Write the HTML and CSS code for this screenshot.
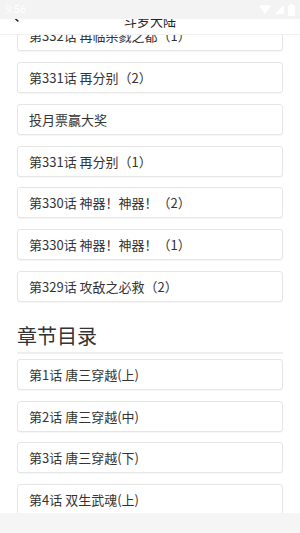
FILE: index.html
```html
<!DOCTYPE html>
<html lang="zh">
<head>
<meta charset="utf-8">
<title>斗罗大陆</title>
<link rel="stylesheet" href="styles.css">
</head>
<body>
<div class="app">
  <div class="status">
    <span class="time">9:56</span>
    <span class="sicons">
      <svg width="12" height="9" viewBox="0 0 12 9"><path d="M0 1 Q6 -1.5 12 1 L6 9 Z" fill="#fff"/></svg>
      <svg width="9" height="9" viewBox="0 0 9 9"><path d="M9 0 L9 9 L0 9 Z" fill="#fff"/></svg>
      <svg width="7" height="12" viewBox="0 0 7 12"><rect x="2" y="0" width="3" height="1.5" fill="#fff"/><rect x="0" y="1.3" width="7" height="10.7" rx="0.7" fill="#fff"/></svg>
    </span>
  </div>
  <div class="header">
    <div class="header-inner">
      <span class="back">
        <svg width="7" height="11" viewBox="0 0 7 11"><path d="M6.3 0.6 L1 5.5 L6.3 10.4" fill="none" stroke="#222" stroke-width="1.5"/></svg>
      </span>
      <span class="title">斗罗大陆</span>
      <span class="spacer"></span>
    </div>
  </div>
  <div class="content">
    <div class="card first">第332话 再临杀戮之都（1）</div>
    <div class="card">第331话 再分别（2）</div>
    <div class="card">投月票赢大奖</div>
    <div class="card">第331话 再分别（1）</div>
    <div class="card">第330话 神器！神器！（2）</div>
    <div class="card">第330话 神器！神器！（1）</div>
    <div class="card">第329话 攻敌之必救（2）</div>
    <div class="section-title">章节目录</div>
    <div class="card">第1话 唐三穿越(上)</div>
    <div class="card">第2话 唐三穿越(中)</div>
    <div class="card">第3话 唐三穿越(下)</div>
    <div class="card">第4话 双生武魂(上)</div>
  </div>
  <div class="bottom"></div>
</div>
</body>
</html>
```
FILE: styles.css
```css
* { box-sizing: border-box; }
html, body { margin: 0; padding: 0; background: #fff; }
body { font-family: "Noto Sans CJK SC", "Noto Sans", sans-serif; color: #333; }
.app { width: 300px; height: 533px; display: flex; flex-direction: column; overflow: hidden; }
.status { flex: none; height: 19px; background: #f3f3f3; display: flex; align-items: center; justify-content: space-between; padding: 0 5px 0 5px; color: #fff; font-family: Roboto, sans-serif; font-size: 11px; }
.sicons { display: flex; align-items: center; gap: 4px; }
.header { flex: none; height: 16px; overflow: hidden; background: #fff; border-bottom: 1px solid #efefef; }
.header-inner { margin-top: -11px; height: 25px; display: grid; grid-template-columns: 40px 1fr 40px; align-items: start; }
.back { padding-left: 12px; padding-top: 3px; display: flex; }
.title { text-align: center; font-size: 13px; line-height: 25px; color: #222; }
.content { flex: 1; overflow: hidden; padding: 0 17px; display: flex; flex-direction: column; }
.card { flex: none; height: 31px; margin-bottom: 10.75px; background: #fff; border: 1px solid #e6e6e6; border-radius: 3px; box-shadow: 0 1px 1px rgba(0,0,0,0.04); padding-left: 11px; font-size: 13px; line-height: 29px; color: #333; white-space: nowrap; }
.card.first { margin-top: -14.75px; }
.section-title { flex: none; margin-top: 9.25px; margin-bottom: 5px; height: 32px; font-size: 20px; line-height: 28px; padding-bottom: 2px; border-bottom: 2px solid #eeeeee; color: #333; }
.bottom { flex: none; height: 20px; background: #f5f5f5; }
```
